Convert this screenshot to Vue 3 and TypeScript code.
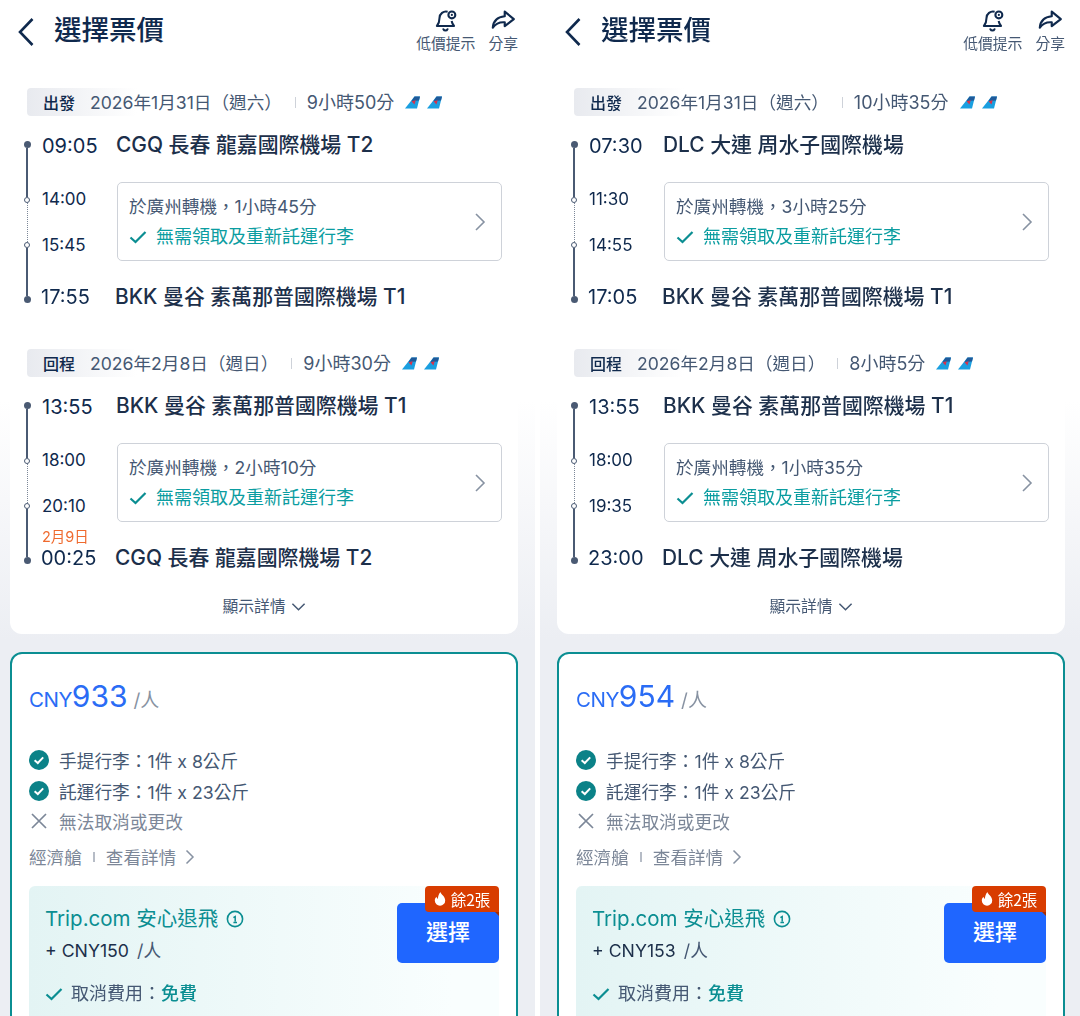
<template>
  <div class="page">
    <section v-for="panel in panels" :key="panel.price" class="panel">
      <header class="topbar">
        <svg class="back" viewBox="0 0 18 30" width="18" height="30"><path d="M15.500 2 3 15l12.500 13" fill="none" stroke="#0f294d" stroke-width="2.600" /></svg>
        <h1>選擇票價</h1>
        <div class="action action-alert">
          <svg viewBox="0 0 24 24" width="26" height="26" fill="none" stroke="#0f294d" stroke-width="1.900">
            <path d="M13.500 3.400A6 6 0 0 0 6 9.200c0 3.600-.8 5.400-2.400 7.400h15.800c-1.300-1.600-1.900-3-2.200-4.600" stroke-linejoin="round" />
            <path d="M9.600 19.600c.8 1.600 3 1.600 3.800 0" stroke-linecap="round" />
            <circle cx="17.400" cy="6.400" r="3.200" />
            <circle cx="17.400" cy="6.400" r="1" fill="#0f294d" stroke="none" />
          </svg>
          <span>低價提示</span>
        </div>
        <div class="action">
          <svg viewBox="0 0 24 24" width="26" height="26" fill="none" stroke="#0f294d" stroke-width="2" stroke-linejoin="round">
            <path d="M13.600 3.400 22 10.200l-8.400 6.600v-3.600c-4.600-.4-8 .8-11 5 .4-6.200 4.600-10 11-10.600z" />
          </svg>
          <span>分享</span>
        </div>
      </header>

      <div class="summary">
        <div v-for="leg in panel.legs" :key="leg.label" class="leg">
          <div class="leg-head">
            <div class="pill"><b>{{ leg.label }}</b><span>{{ leg.date }}</span></div>
            <i class="sep" :style="{ marginLeft: leg.sepGap + 'px' }"></i>
            <span class="dur">{{ leg.duration }}</span>
            <svg v-for="n in 2" :key="n" class="tail" viewBox="0 0 15 13" width="15" height="13">
              <path d="M9.500 0.500H15L12 12.500H0z" fill="#1a9fe0" />
              <path d="M9.500 0.500H15l-1 4-7.500 0.500z" fill="#1f5a9a" />
              <path d="M6.500 5.200 10.800 4.200 9.400 8.400z" fill="#d8324a" />
            </svg>
          </div>
          <div class="route">
            <div class="rail">
              <i class="dot"></i><i class="seg" style="flex: 49px 0 0"></i>
              <i class="ring"></i><i class="dash"></i><i class="ring"></i>
              <i class="seg" style="flex: 1"></i><i class="dot"></i>
            </div>
            <div class="big-time">{{ leg.dep }}</div>
            <div class="place">{{ leg.from }}</div>
            <div class="stop-times"><span>{{ leg.arr }}</span><span>{{ leg.next }}</span></div>
            <div class="stop-box">
              <div class="stop-text">
                <p>於廣州轉機，{{ leg.stop }}</p>
                <p class="no-claim">
                  <svg viewBox="0 0 18 14" width="18" height="14"><path d="M1.500 7.500 6.500 12 16.500 2" fill="none" stroke="#0b8e92" stroke-width="2.200" /></svg>
                  無需領取及重新託運行李
                </p>
              </div>
              <svg viewBox="0 0 12 20" width="12" height="20"><path d="M2 2l8 8-8 8" fill="none" stroke="#8792a2" stroke-width="1.600" /></svg>
            </div>
            <div class="big-time last">
              <em v-if="leg.nextDay">{{ leg.nextDay }}</em>{{ leg.end }}
            </div>
            <div class="place last">{{ leg.to }}</div>
          </div>
        </div>
        <div class="more">顯示詳情
          <svg viewBox="0 0 16 10" width="15" height="10"><path d="M1.500 1.500 8 8l6.500-6.500" fill="none" stroke="#455873" stroke-width="1.600" /></svg>
        </div>
      </div>

      <div class="fare">
        <div class="price"><span class="cur">CNY</span><span class="amount">{{ panel.price }}</span><span class="per">/人</span></div>
        <ul class="perks">
          <li>
            <svg viewBox="0 0 20 20" width="20" height="20"><circle cx="10" cy="10" r="10" fill="#0b8288" /><path d="M5.600 10.200 8.800 13l5.400-5.600" fill="none" stroke="#fff" stroke-width="2" /></svg>
            手提行李：1件 x 8公斤
          </li>
          <li>
            <svg viewBox="0 0 20 20" width="20" height="20"><circle cx="10" cy="10" r="10" fill="#0b8288" /><path d="M5.600 10.200 8.800 13l5.400-5.600" fill="none" stroke="#fff" stroke-width="2" /></svg>
            託運行李：1件 x 23公斤
          </li>
          <li class="off">
            <svg viewBox="0 0 20 20" width="20" height="20"><path d="M3 3l14 14M17 3 3 17" fill="none" stroke="#7c8798" stroke-width="1.700" /></svg>
            無法取消或更改
          </li>
        </ul>
        <div class="cabin">經濟艙<i></i>查看詳情
          <svg viewBox="0 0 10 16" width="10" height="16"><path d="M1.500 1.500 8 8l-6.500 6.500" fill="none" stroke="#8792a2" stroke-width="1.500" /></svg>
        </div>
        <div class="protect">
          <div class="protect-info">
            <div class="protect-title">Trip.com 安心退飛
              <svg viewBox="0 0 18 18" width="18" height="18"><circle cx="9" cy="9" r="7.600" fill="none" stroke="#0b8e92" stroke-width="1.600" /><path d="M7.400 7.600 9.200 6.600v5M7.400 12.400h3.600" fill="none" stroke="#0b8e92" stroke-width="1.500" /></svg>
            </div>
            <div class="protect-price">+ CNY{{ panel.extra }} <span>/人</span></div>
            <div class="protect-fee">
              <svg viewBox="0 0 18 14" width="18" height="14"><path d="M1.500 7.500 6.500 12 16.500 2" fill="none" stroke="#0b8e92" stroke-width="2.200" /></svg>
              取消費用：<b>免費</b>
            </div>
          </div>
          <button class="pick" type="button">
            選擇
            <span class="left-badge">
              <svg viewBox="0 0 12 14" width="12" height="14"><path d="M6.400 0c.5 2.600 4.800 4.200 4.800 8.400A5.200 5.200 0 0 1 .8 8.600c0-1.800.8-3 1.800-3.800.1 1.200.6 1.800 1.300 2C4 4.600 4.800 2 6.400 0z" fill="#fff" /></svg>
              餘2張
            </span>
          </button>
        </div>
      </div>
    </section>
  </div>
</template>

<script setup lang="ts">
type Leg = {
  label: string
  date: string
  sepGap: number
  duration: string
  dep: string
  from: string
  arr: string
  next: string
  stop: string
  end: string
  to: string
  nextDay?: string
}

const cgq = 'CGQ 長春 龍嘉國際機場 T2'
const bkk = 'BKK 曼谷 素萬那普國際機場 T1'
const dlc = 'DLC 大連 周水子國際機場'

const panels: { price: number; extra: number; legs: Leg[] }[] = [
  {
    price: 933,
    extra: 150,
    legs: [
      { label: '出發', date: '2026年1月31日（週六）', sepGap: 13, duration: '9小時50分', dep: '09:05', from: cgq, arr: '14:00', next: '15:45', stop: '1小時45分', end: '17:55', to: bkk },
      { label: '回程', date: '2026年2月8日（週日）', sepGap: 13, duration: '9小時30分', dep: '13:55', from: bkk, arr: '18:00', next: '20:10', stop: '2小時10分', end: '00:25', to: cgq, nextDay: '2月9日' }
    ]
  },
  {
    price: 954,
    extra: 153,
    legs: [
      { label: '出發', date: '2026年1月31日（週六）', sepGap: 13, duration: '10小時35分', dep: '07:30', from: dlc, arr: '11:30', next: '14:55', stop: '3小時25分', end: '17:05', to: bkk },
      { label: '回程', date: '2026年2月8日（週日）', sepGap: 12, duration: '8小時5分', dep: '13:55', from: bkk, arr: '18:00', next: '19:35', stop: '1小時35分', end: '23:00', to: dlc }
    ]
  }
]
</script>

<style>
html, body {
  margin: 0;
  height: 1016px;
  overflow: hidden;
  background: #fff;
}
</style>

<style scoped>
.page {
  display: flex;
  gap: 5px;
  width: 1080px;
  height: 1016px;
  overflow: hidden;
  font-family: Inter, "Noto Sans CJK TC", sans-serif;
  color: #0f294d;
  filter: blur(0.5px);
}

.panel {
  flex: 0 0 535px;
  box-sizing: border-box;
  height: 1016px;
  padding: 0 17px 0 10px;
  background: linear-gradient(#fff 400px, #eceef3 640px);
}

.panel + .panel {
  flex-basis: 540px;
  padding: 0 15px 0 17px;
}

.topbar {
  display: flex;
  align-items: flex-start;
  height: 88px;
}

.back {
  margin: 17px 19px 0 7px;
}

h1 {
  flex: 1;
  margin: 12px 0 0;
  font-size: 27.500px;
  line-height: 36px;
  font-weight: 500;
}

.action {
  display: flex;
  flex-direction: column;
  align-items: center;
  margin-top: 8px;
  font-size: 14.800px;
  line-height: 20px;
  color: #455873;
}

.action-alert {
  margin-right: 13px;
}

.summary {
  padding-bottom: 18px;
  background: #fff;
  border-radius: 0 0 12px 12px;
  height: 546px;
  box-sizing: border-box;
}

.leg {
  height: 261px;
}

.leg-head {
  display: flex;
  align-items: center;
  height: 28px;
  margin-left: 17px;
  font-size: 17.600px;
  color: #455873;
}

.pill {
  display: flex;
  align-items: center;
  gap: 15px;
  height: 28px;
  padding-left: 16px;
  border-radius: 4px;
  background: linear-gradient(90deg, #e8eaef, #fff 110px);
}

.pill b {
  font-size: 16px;
  font-weight: 500;
  color: #0f294d;
}

.pill span,
.dur {
  padding-bottom: 2px;
}

.sep {
  width: 1px;
  height: 11px;
  margin-right: 11px;
  background: #ced2d9;
}

.dur {
  font-size: 18px;
}

.tail {
  margin-left: 7px;
}

.dur + .tail {
  margin-left: 11px;
}

.route {
  display: grid;
  grid-template-columns: 32px 75px 385px;
  grid-template-rows: 30px 79px 30px;
  row-gap: 21px;
  margin-top: 15px;
}

.rail {
  grid-row: 1 / 4;
  display: flex;
  flex-direction: column;
  align-items: center;
  width: 34px;
  padding: 10px 0 9px;
  box-sizing: border-box;
}

.dot {
  flex: none;
  width: 7px;
  height: 7px;
  border-radius: 50%;
  background: #4a5a73;
}

.seg {
  width: 2.500px;
  background: #4a5a73;
}

.ring {
  flex: none;
  width: 6px;
  height: 6px;
  box-sizing: border-box;
  border: 1.200px solid #4a5a73;
  border-radius: 50%;
  background: #fff;
}

.dash {
  flex: 39px 0 0;
  border-left: 1.500px dotted #7c8798;
}

.big-time {
  font-size: 20px;
  line-height: 30px;
  color: #0f294d;
}

.big-time.last {
  position: relative;
  margin-left: -1px;
}

.big-time em {
  position: absolute;
  left: 1px;
  top: -16px;
  font-style: normal;
  font-size: 14.500px;
  line-height: 20px;
  color: #ef6a2e;
}

.place {
  margin-left: -1px;
  font-size: 20.900px;
  line-height: 28px;
  font-weight: 500;
  color: #1c2f4a;
}

.place.last {
  margin: 1px 0 0 -2px;
}

.stop-times {
  display: flex;
  flex-direction: column;
  gap: 22px;
  padding-top: 5px;
  font-size: 17px;
  line-height: 24px;
}

.stop-box {
  display: flex;
  align-items: center;
  justify-content: space-between;
  box-sizing: border-box;
  padding: 0 15px 0 11px;
  border: 1px solid #ced2d9;
  border-radius: 5px;
  background: #fff;
}

.stop-text p {
  margin: 0;
  font-size: 17.600px;
  line-height: 28px;
  color: #455873;
}

.stop-text p.no-claim {
  display: flex;
  align-items: center;
  gap: 9px;
  margin-top: 2px;
  font-size: 18px;
  color: #0b9da1;
}

.more {
  display: flex;
  align-items: center;
  justify-content: center;
  gap: 5px;
  margin-top: -14px;
  font-size: 15.800px;
  line-height: 22px;
  color: #455873;
}

.fare {
  box-sizing: border-box;
  height: 400px;
  margin-top: 18px;
  padding: 24px 17px 0;
  background: #fff;
  border: 2px solid #0b8e92;
  border-radius: 12px;
}

.price {
  display: flex;
  align-items: baseline;
  height: 36px;
  color: #2a6cf5;
}

.cur {
  font-size: 20.500px;
  letter-spacing: -0.5px;
}

.amount {
  font-size: 30px;
  line-height: 36px;
}

.per {
  margin-left: 6px;
  font-size: 19px;
  color: #8792a2;
}

.perks {
  margin: 31px 0 0;
  padding: 0;
  list-style: none;
  font-size: 17.700px;
  color: #455873;
}

.perks li {
  display: flex;
  align-items: center;
  gap: 10px;
  height: 30.500px;
}

.perks li.off {
  color: #7c8798;
}

.cabin {
  display: flex;
  align-items: center;
  height: 24px;
  margin-top: 8px;
  font-size: 17.600px;
  color: #7c8798;
}

.cabin i {
  width: 2px;
  height: 10px;
  margin: 0 11px;
  background: #b6bcc6;
}

.cabin svg {
  margin-left: 9px;
}

.protect {
  display: flex;
  justify-content: space-between;
  height: 160px;
  margin-top: 17px;
  border-radius: 6px;
  background: linear-gradient(90deg, #e3f4f4, #f9fefe 90%);
}

.protect-info {
  padding: 20px 0 0 16px;
}

.protect-title {
  display: flex;
  align-items: center;
  gap: 8px;
  font-size: 20.500px;
  line-height: 26px;
  color: #0b8e92;
}

.protect-price {
  margin-top: 7px;
  font-size: 17.700px;
  line-height: 24px;
  color: #1c2f4a;
}

.protect-price span {
  margin-left: 3px;
  color: #455873;
}

.protect-fee {
  display: flex;
  align-items: center;
  margin-top: 18px;
  font-size: 18px;
  line-height: 26px;
  color: #455873;
}

.protect-fee svg {
  margin-right: 8px;
}

.protect-fee b {
  font-weight: 500;
  color: #0b8e92;
}

.pick {
  position: relative;
  flex: none;
  align-self: flex-start;
  width: 102px;
  height: 60px;
  margin-top: 17px;
  padding: 0 0 6px;
  border: 0;
  border-radius: 5px;
  background: #1f66ff;
  color: #fff;
  font: 500 22px "Noto Sans CJK TC", sans-serif;
}

.left-badge {
  position: absolute;
  right: 0;
  top: -17px;
  display: flex;
  align-items: center;
  justify-content: center;
  gap: 5px;
  width: 74px;
  height: 26px;
  border-radius: 4px 4px 0 4px;
  background: #d83c00;
  font-size: 15.500px;
  font-weight: 400;
}

.left-badge::after {
  content: "";
  position: absolute;
  right: 0;
  top: 26px;
  border-top: 4px solid #a82e00;
  border-left: 4px solid transparent;
}
</style>
